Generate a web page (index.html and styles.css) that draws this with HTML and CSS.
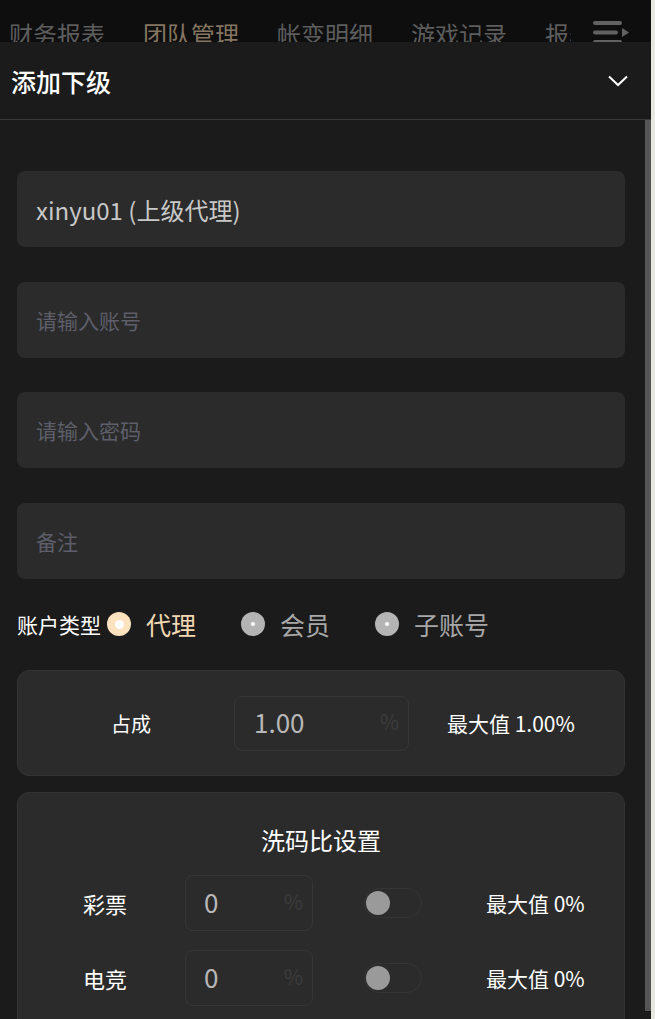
FILE: index.html
```html
<!doctype html>
<html>

<head>
    <meta charset="utf-8">
    <link rel="stylesheet" href="styles.css">
</head>

<body>
    <div class="app">
        <div class="tabs">
            <span class="tab">财务报表</span>
            <span class="tab active">团队管理</span>
            <span class="tab">帐变明细</span>
            <span class="tab">游戏记录</span>
            <span class="tab">报表</span>
            <div class="menu-btn">
                <svg width="40" height="42" viewBox="0 0 40 42">
                    <g stroke="#626262" stroke-width="4" stroke-linecap="round">
                        <line x1="4" y1="23" x2="29" y2="23" />
                        <line x1="4" y1="32.5" x2="25" y2="32.5" />
                        <line x1="4" y1="42" x2="29" y2="42" />
                    </g>
                    <polygon points="31,28 38,32.5 31,37" fill="#626262" />
                </svg>
            </div>
        </div>

        <div class="panel">
            <div class="panel-head">
                <span class="panel-title">添加下级</span>
                <svg class="chevron" width="22" height="12" viewBox="0 0 22 12">
                    <polyline points="2,1.5 11,10 20,1.5" fill="none" stroke="#fff" stroke-width="2" />
                </svg>
            </div>

            <div class="panel-body">
                <div class="scroll-thumb"></div>

                <div class="fields">
                    <div class="field value">xinyu01 (上级代理)</div>
                    <div class="field placeholder">请输入账号</div>
                    <div class="field placeholder">请输入密码</div>
                    <div class="field placeholder">备注</div>
                </div>

                <div class="type-row">
                    <span class="type-label">账户类型</span>
                    <span class="radio checked"></span>
                    <span class="radio-text checked">代理</span>
                    <span class="radio"></span>
                    <span class="radio-text">会员</span>
                    <span class="radio"></span>
                    <span class="radio-text">子账号</span>
                </div>

                <div class="card share-card">
                    <span class="share-label">占成</span>
                    <div class="num-box wide">
                        <span class="num">1.00</span>
                        <span class="pct">%</span>
                    </div>
                    <span class="max-text share-max">最大值 1.00%</span>
                </div>

                <div class="card rebate-card">
                    <div class="card-title">洗码比设置</div>
                    <div class="rebate-row">
                        <span class="rebate-label">彩票</span>
                        <div class="num-box">
                            <span class="num">0</span>
                            <span class="pct">%</span>
                        </div>
                        <span class="switch"><span class="knob"></span></span>
                        <span class="max-text">最大值 0%</span>
                    </div>
                    <div class="rebate-row">
                        <span class="rebate-label">电竞</span>
                        <div class="num-box">
                            <span class="num">0</span>
                            <span class="pct">%</span>
                        </div>
                        <span class="switch"><span class="knob"></span></span>
                        <span class="max-text">最大值 0%</span>
                    </div>
                    <div class="rebate-row">
                        <span class="rebate-label">体育</span>
                        <div class="num-box">
                            <span class="num">0</span>
                            <span class="pct">%</span>
                        </div>
                        <span class="switch"><span class="knob"></span></span>
                        <span class="max-text">最大值 0%</span>
                    </div>
                </div>
            </div>
        </div>
    </div>
</body>

</html>
```

FILE: styles.css
```css
html,
body {
    overflow: hidden;
    width: 100%;
    height: 100%;
    margin: 0;
}

body {
    background-color: #e8e8e3;
    font-family: "Noto Sans CJK SC", "Noto Sans", sans-serif;
}

.app {
    width: 651px;
    height: 100%;
    background-color: #1b1b1b;
    overflow: hidden;
}

/* top tab strip, cut off by the panel below */
.tabs {
    position: relative;
    height: 42px;
    background-color: #0e0e0e;
    display: flex;
    gap: 38px;
    padding-left: 9px;
    overflow: hidden;
    white-space: nowrap;
}

.tab {
    font-size: 24px;
    line-height: 30px;
    padding-top: 19px;
    color: #5d5d5d;
}

.tab.active {
    color: #857662;
}

.menu-btn {
    position: absolute;
    top: 0;
    right: 0;
    width: 80px;
    height: 42px;
    background-color: #0e0e0e;
    display: flex;
    justify-content: flex-end;
    padding-right: 20px;
    box-sizing: border-box;
}

.panel-head {
    height: 77px;
    display: flex;
    align-items: center;
    justify-content: space-between;
    padding: 0 22px 0 11px;
    border-bottom: 1px solid #393939;
}

.panel-title {
    color: #fff;
    font-size: 25px;
    font-weight: 500;
}

.panel-body {
    position: relative;
    padding: 51px 26px 0 17px;
}

.scroll-thumb {
    position: absolute;
    top: 0;
    right: 0;
    width: 6px;
    height: 891px;
    background-color: #555;
}

.fields {
    display: flex;
    flex-direction: column;
    gap: 34.7px;
}

.field {
    height: 76px;
    border-radius: 8px;
    background-color: #2b2b2b;
    display: flex;
    align-items: center;
    padding-left: 19px;
}

.field.value {
    color: #c8c8c8;
    font-size: 24px;
}

.field.placeholder {
    color: #5d5e69;
    font-size: 21px;
}

.type-row {
    height: 46px;
    margin: 22px 0 23px;
    display: flex;
    align-items: center;
}

.type-label {
    color: #fff;
    font-size: 21px;
    margin-right: 6px;
}

.radio {
    width: 24px;
    height: 24px;
    border-radius: 50%;
    background-color: #b4b4b4;
    display: flex;
    align-items: center;
    justify-content: center;
    flex-shrink: 0;
}

.radio::after {
    content: "";
    width: 4px;
    height: 4px;
    border-radius: 50%;
    background-color: #fff;
}

.radio.checked {
    background-color: #fde2bf;
}

.radio.checked::after {
    width: 9px;
    height: 9px;
}

.radio-text {
    color: #a8a8a8;
    font-size: 25px;
    margin: 0 45px 0 15px;
}

.radio-text.checked {
    color: #f1d8b2;
}

.card {
    background-color: #2b2b2b;
    border: 1px solid #333;
    border-radius: 12px;
}

.share-card {
    height: 104px;
    display: flex;
    align-items: center;
}

.share-label {
    width: 206px;
    padding-left: 10px;
    text-align: center;
    color: #fff;
    font-size: 20px;
}

.num-box {
    width: 128px;
    height: 56px;
    box-sizing: border-box;
    border: 1px solid #363636;
    border-radius: 8px;
    display: flex;
    align-items: center;
    justify-content: space-between;
    padding: 0 9px 0 18px;
}

.num-box.wide {
    width: 175px;
    padding-left: 19px;
    height: 55px;
}

.num {
    color: #b8b8b8;
    font-size: 26px;
    margin-top: -4px;
}

.pct {
    color: #3c3c3c;
    font-size: 21px;
    margin-top: -4px;
}

.max-text {
    color: #fff;
    font-size: 21px;
}

.share-max {
    margin-left: 38px;
}

.rebate-card {
    margin-top: 16px;
    padding-top: 30px;
    height: 400px;
}

.card-title {
    color: #fff;
    font-size: 24px;
    line-height: 34px;
    text-align: center;
}

.rebate-row {
    display: flex;
    align-items: center;
    margin-top: 19px;
}

.rebate-card .card-title + .rebate-row {
    margin-top: 18px;
}

.rebate-label {
    width: 160px;
    padding-left: 7px;
    text-align: center;
    color: #fff;
    font-size: 22px;
}

.switch {
    width: 58px;
    height: 30px;
    box-sizing: border-box;
    border: 1px solid #353535;
    border-radius: 15px;
    margin: 0 64px 0 51px;
    display: flex;
    align-items: center;
    padding-left: 1px;
}

.knob {
    width: 24px;
    height: 24px;
    border-radius: 50%;
    background-color: #9a9a9a;
}
```
